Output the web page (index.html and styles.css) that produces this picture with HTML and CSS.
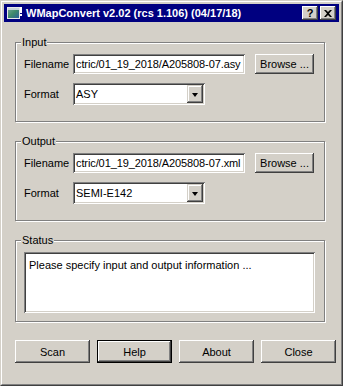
FILE: index.html
```html
<!DOCTYPE html>
<html lang="en">
<head>
    <meta charset="UTF-8">
    <title>WMapConvert</title>
    <link rel="stylesheet" href="styles.css">
</head>
<body>
    <div class="window">
        <div class="frame">
            <div class="titlebar">
                <svg class="app-icon" width="16" height="16" viewBox="0 0 16 16">
                    <defs>
                        <linearGradient id="screen" x1="0" y1="0" x2="1" y2="1">
                            <stop offset="0" stop-color="#7fa8a0"/>
                            <stop offset="0.5" stop-color="#3f8a6a"/>
                            <stop offset="1" stop-color="#2a5aa0"/>
                        </linearGradient>
                    </defs>
                    <rect x="1.5" y="2.5" width="12" height="11" fill="url(#screen)" stroke="#e8e8e8"/>
                    <rect x="2" y="3" width="11" height="2" fill="#c8d4d8"/>
                    <rect x="14" y="2" width="2" height="6" fill="#ffffff"/>
                    <rect x="14" y="9" width="2" height="2" fill="#ffffff"/>
                </svg>
                <span class="title">WMapConvert v2.02 (rcs 1.106) (04/17/18)</span>
                <span class="cap-btn help-cap">?</span>
                <span class="cap-btn">
                    <svg width="8" height="7" viewBox="0 0 8 7">
                        <path d="M0 0 L2 0 L4 2 L6 0 L8 0 L5 3.5 L8 7 L6 7 L4 5 L2 7 L0 7 L3 3.5 Z" fill="#000"/>
                    </svg>
                </span>
            </div>

            <div class="client">
                <!-- Input -->
                <fieldset class="group">
                    <legend>Input</legend>
                    <div class="row">
                        <span class="label">Filename</span>
                        <div class="field path">ctric/01_19_2018/A205808-07.asy</div>
                        <button class="btn">Browse ...</button>
                    </div>
                    <div class="row">
                        <span class="label">Format</span>
                        <div class="combo"><span class="combo-text">ASY</span><span class="drop"></span></div>
                    </div>
                </fieldset>

                <!-- Output -->
                <fieldset class="group">
                    <legend>Output</legend>
                    <div class="row">
                        <span class="label">Filename</span>
                        <div class="field path">ctric/01_19_2018/A205808-07.xml</div>
                        <button class="btn">Browse ...</button>
                    </div>
                    <div class="row">
                        <span class="label">Format</span>
                        <div class="combo"><span class="combo-text">SEMI-E142</span><span class="drop"></span></div>
                    </div>
                </fieldset>

                <!-- Status -->
                <fieldset class="group status-group">
                    <legend>Status</legend>
                    <div class="field status">Please specify input and output information ...</div>
                </fieldset>

                <div class="actions">
                    <button class="btn">Scan</button>
                    <button class="btn default">Help</button>
                    <button class="btn">About</button>
                    <button class="btn">Close</button>
                </div>
            </div>
        </div>
    </div>
</body>
</html>
```

FILE: styles.css
```css
body {
    margin: 0;
    background: #d4d0c8;
    font-family: 'Liberation Sans', Arial, sans-serif;
    font-size: 11px;
    color: #000;
}
.window {
    width: 343px;
    height: 386px;
    box-sizing: border-box;
    border: 1px solid;
    border-color: #d4d0c8 #404040 #404040 #d4d0c8;
    background: #d4d0c8;
}
.frame {
    height: 100%;
    box-sizing: border-box;
    border: 1px solid;
    border-color: #fff #808080 #808080 #fff;
    padding: 2px;
    display: flex;
    flex-direction: column;
}
.titlebar {
    height: 18px;
    flex: none;
    display: flex;
    align-items: center;
    padding: 0 3px 0 2px;
    background: #000080;
    color: #fff;
}
.app-icon {
    flex: none;
    margin-right: 4px;
}
.title {
    font-weight: bold;
    font-size: 11px;
    white-space: nowrap;
}
.cap-btn {
    width: 16px;
    height: 14px;
    box-sizing: border-box;
    display: flex;
    align-items: center;
    justify-content: center;
    background: #d4d0c8;
    color: #000;
    font-weight: bold;
    font-size: 11px;
    box-shadow: inset -1px -1px #404040, inset 1px 1px #fff, inset -2px -2px #808080, inset 2px 2px #d4d0c8;
}
.help-cap {
    margin-left: auto;
    margin-right: 2px;
}
.client {
    flex: 1;
    padding: 14px 0 0 11px;
}
.group {
    width: 310px;
    box-sizing: border-box;
    margin: 0 0 13px 0;
    padding: 5px 8px 16px 8px;
    border: 1px solid #808080;
    box-shadow: inset 1px 1px #fff, 1px 1px #fff;
    min-width: 0;
}
.group legend {
    padding: 0 1px;
    margin-left: -3px;
    line-height: 13px;
    background: #d4d0c8;
}
.row {
    display: grid;
    grid-template-columns: 49px 182px 59px;
    align-items: center;
}
.row + .row {
    margin-top: 9px;
}
.label {
    line-height: 13px;
    white-space: nowrap;
}
.field {
    background: #fff;
    box-sizing: border-box;
    box-shadow: inset 1px 1px #808080, inset -1px -1px #fff, inset 2px 2px #404040, inset -2px -2px #d4d0c8;
}
.path {
    width: 172px;
    height: 20px;
    padding: 0 3px 0 3px;
    line-height: 20px;
    overflow: hidden;
    white-space: nowrap;
    letter-spacing: -0.1px;
}
.btn {
    font: inherit;
    color: #000;
    background: #d4d0c8;
    border: none;
    padding: 0;
    height: 20px;
    box-shadow: inset -1px -1px #404040, inset 1px 1px #fff, inset -2px -2px #808080, inset 2px 2px #d4d0c8;
}
.combo {
    width: 132px;
    height: 22px;
    box-sizing: border-box;
    padding: 2px;
    display: flex;
    align-items: stretch;
    background: #fff;
    box-shadow: inset 1px 1px #808080, inset -1px -1px #fff, inset 2px 2px #404040, inset -2px -2px #d4d0c8;
}
.combo-text {
    flex: 1;
    display: flex;
    align-items: center;
    padding-left: 1px;
}
.drop {
    width: 16px;
    flex: none;
    display: flex;
    align-items: center;
    justify-content: center;
    background: #d4d0c8;
    box-shadow: inset -1px -1px #404040, inset 1px 1px #d4d0c8, inset -2px -2px #808080, inset 2px 2px #fff;
}
.drop::after {
    content: "";
    border-left: 3.5px solid transparent;
    border-right: 3.5px solid transparent;
    border-top: 4px solid #000;
    margin-top: 1px;
}
.status-group {
    padding-top: 5px;
    padding-bottom: 8px;
    margin-bottom: 0;
}
.status {
    width: 291px;
    height: 61px;
    padding: 7px 5px;
    line-height: 13px;
}
.actions {
    display: flex;
    gap: 7px;
    margin-top: 18px;
}
.actions .btn {
    width: 75px;
    height: 23px;
}
.actions .default {
    border: 1px solid #000;
}
```
